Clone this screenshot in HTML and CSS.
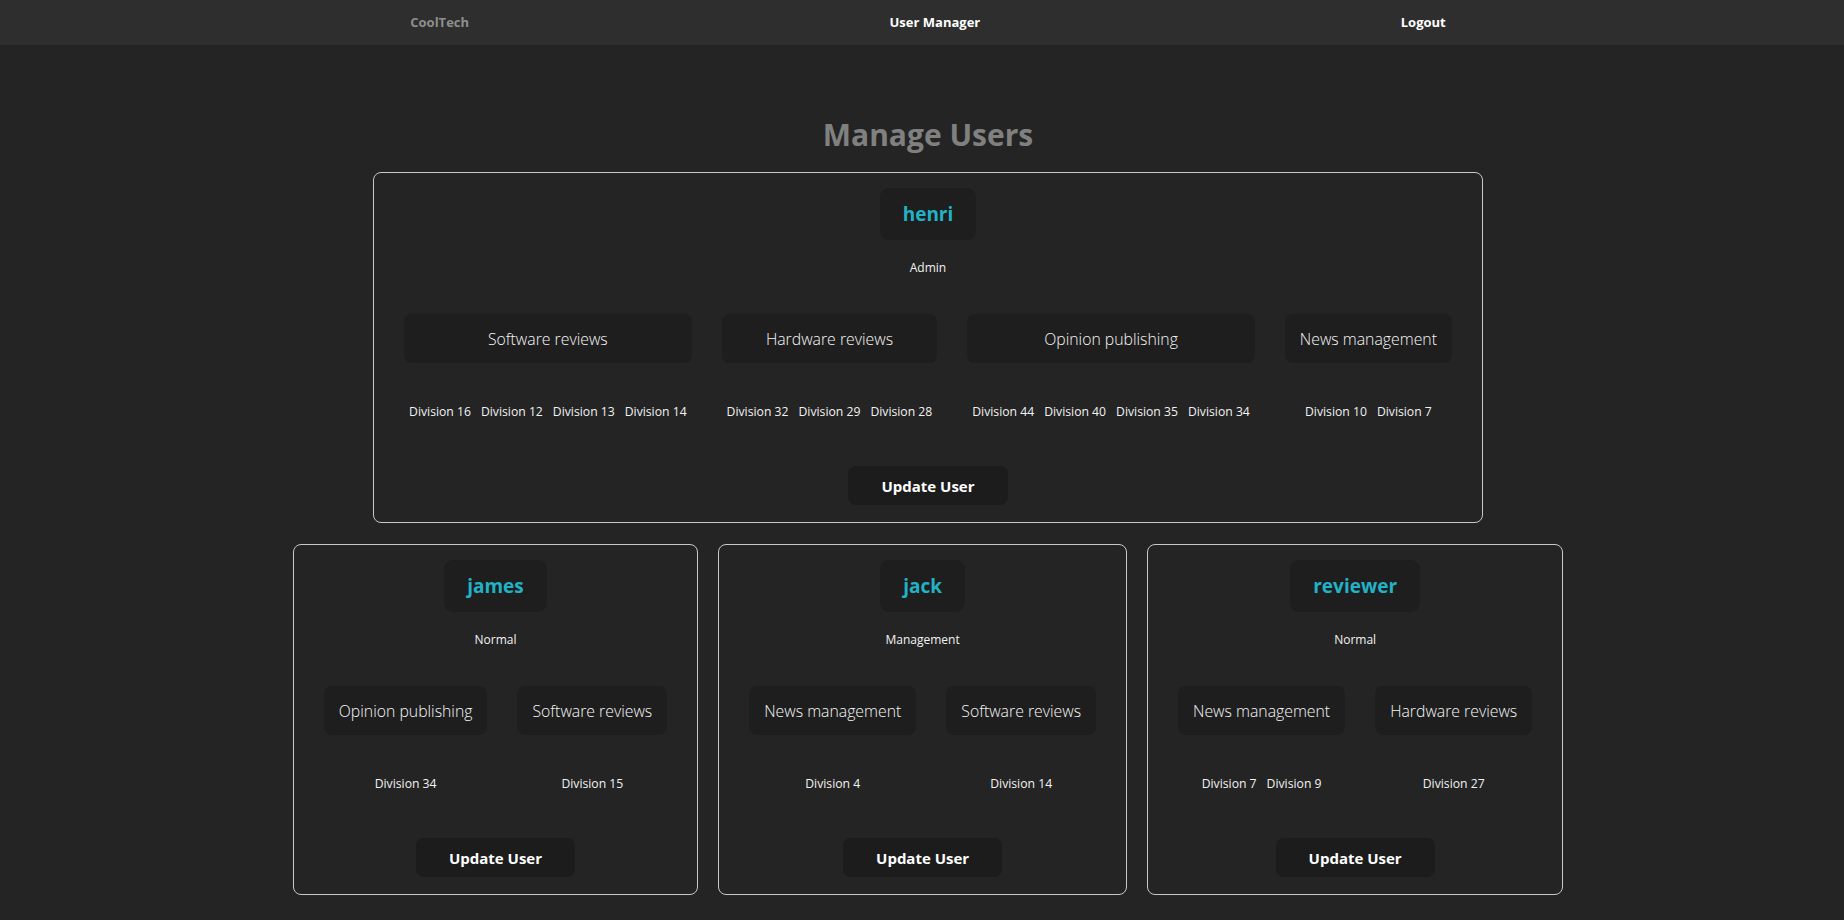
FILE: index.html
```html
<!DOCTYPE html>
<html lang="en">
<head>
<meta charset="utf-8">
<title>User Manager</title>
<link rel="stylesheet" href="styles.css">
</head>
<body>
<header class="topbar">
  <nav class="topbar-inner">
    <a class="brand" href="#">CoolTech</a>
    <a class="nav-link" href="#">User Manager</a>
    <a class="nav-link" href="#">Logout</a>
  </nav>
</header>
<main class="page">
  <h1 class="title">Manage Users</h1>
  <div class="cards">
    <section class="card">
      <div class="name">henri</div>
      <p class="role">Admin</p>
      <div class="perms">
        <div class="perm">
          <div class="perm-name">Software reviews</div>
          <div class="divs"><span>Division 16</span><span>Division 12</span><span>Division 13</span><span>Division 14</span></div>
        </div>
        <div class="perm">
          <div class="perm-name">Hardware reviews</div>
          <div class="divs"><span>Division 32</span><span>Division 29</span><span>Division 28</span></div>
        </div>
        <div class="perm">
          <div class="perm-name">Opinion publishing</div>
          <div class="divs"><span>Division 44</span><span>Division 40</span><span>Division 35</span><span>Division 34</span></div>
        </div>
        <div class="perm">
          <div class="perm-name">News management</div>
          <div class="divs"><span>Division 10</span><span>Division 7</span></div>
        </div>
      </div>
      <button class="update">Update User</button>
    </section>

    <section class="card">
      <div class="name">james</div>
      <p class="role">Normal</p>
      <div class="perms">
        <div class="perm">
          <div class="perm-name">Opinion publishing</div>
          <div class="divs"><span>Division 34</span></div>
        </div>
        <div class="perm">
          <div class="perm-name">Software reviews</div>
          <div class="divs"><span>Division 15</span></div>
        </div>
      </div>
      <button class="update">Update User</button>
    </section>

    <section class="card">
      <div class="name">jack</div>
      <p class="role">Management</p>
      <div class="perms">
        <div class="perm">
          <div class="perm-name">News management</div>
          <div class="divs"><span>Division 4</span></div>
        </div>
        <div class="perm">
          <div class="perm-name">Software reviews</div>
          <div class="divs"><span>Division 14</span></div>
        </div>
      </div>
      <button class="update">Update User</button>
    </section>

    <section class="card">
      <div class="name">reviewer</div>
      <p class="role">Normal</p>
      <div class="perms">
        <div class="perm">
          <div class="perm-name">News management</div>
          <div class="divs"><span>Division 7</span><span>Division 9</span></div>
        </div>
        <div class="perm">
          <div class="perm-name">Hardware reviews</div>
          <div class="divs"><span>Division 27</span></div>
        </div>
      </div>
      <button class="update">Update User</button>
    </section>
  </div>
</main>
</body>
</html>
```

FILE: styles.css
```css
* {
  box-sizing: border-box;
}

html, body {
  margin: 0;
  padding: 0;
  background: #242424;
  color: #ffffff;
  font-family: "Open Sans", "Noto Sans", "Liberation Sans", sans-serif;
}

.topbar {
  background: #2e2e2e;
  height: 45px;
}

.topbar-inner {
  width: 1456px;
  margin-left: 200px;
  height: 45px;
  padding-bottom: 2px;
  display: flex;
  align-items: center;
  justify-content: space-around;
}

.topbar-inner a {
  text-decoration: none;
  font-weight: 700;
  font-size: 13px;
  line-height: 18px;
}

.brand {
  color: #8e8e8e;
}

.nav-link {
  color: #ffffff;
}

.page {
  width: 1456px;
  margin-left: 200px;
}

.title {
  margin: 70px 0 17px;
  text-align: center;
  font-size: 30px;
  line-height: 40px;
  font-weight: 700;
  color: #808080;
}

.cards {
  display: flex;
  flex-wrap: wrap;
  justify-content: center;
  column-gap: 20px;
  row-gap: 21px;
}

.card {
  display: flex;
  flex-direction: column;
  align-items: center;
  border: 1px solid #c8c8c8;
  border-radius: 8px;
  padding: 15px 30px 17px;
}

.name {
  background: #1e1e1e;
  border-radius: 9px;
  padding: 14px 23px;
  font-size: 19px;
  line-height: 24px;
  font-weight: 700;
  color: #22b2c6;
}

.role {
  margin: 19px 0 0;
  font-size: 12px;
  line-height: 18px;
  color: #f2f2f2;
}

.perms {
  margin-top: 37px;
  display: flex;
  gap: 30px;
}

.perm {
  display: flex;
  flex-direction: column;
  align-items: stretch;
}

.perm-name {
  background: #1e1e1e;
  border-radius: 8px;
  padding: 13px 15px 11px;
  font-size: 15.8px;
  line-height: 25px;
  font-weight: 300;
  text-align: center;
  color: #f6f6f6;
  white-space: nowrap;
}

.divs {
  margin-top: 40px;
  display: flex;
  justify-content: center;
  font-size: 12.2px;
  line-height: 18px;
  color: #f2f2f2;
  white-space: nowrap;
}

.divs span {
  margin: 0 5px;
}

.update {
  margin-top: 45px;
  height: 39px;
  padding: 1px 33px 0;
  border: none;
  border-radius: 8px;
  background: #1c1c1c;
  color: #ffffff;
  font-family: inherit;
  font-size: 15px;
  font-weight: 700;
  line-height: 21px;
}
```
